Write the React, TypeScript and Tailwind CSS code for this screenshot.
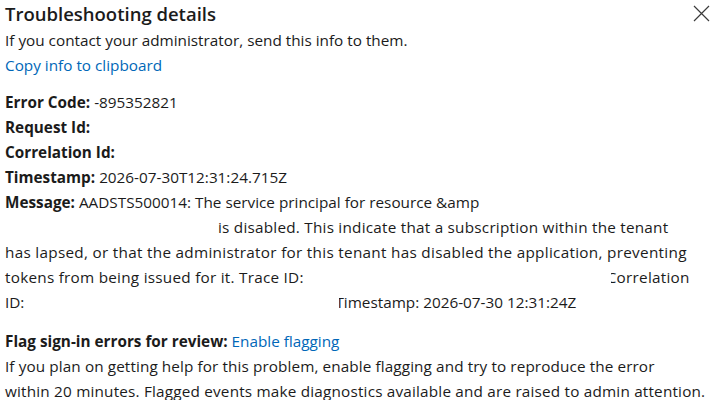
const FIELDS = [
  { label: "Error Code:", value: "-895352821" },
  { label: "Request Id:", value: "" },
  { label: "Correlation Id:", value: "" },
  { label: "Timestamp:", value: "2026-07-30T12:31:24.715Z" },
];

// blank stretch in the message; `clip` masks a few px of what follows
function Gap({ className, clip = false }: { className: string; clip?: boolean }) {
  return (
    <span className={`relative inline-block h-[1px] ${className}`}>
      {clip && <span className="absolute -right-[4px] -top-[20px] z-10 h-[25px] w-[4px] bg-white" />}
    </span>
  );
}

export default function App() {
  return (
    <div
      className="relative h-[400px] w-[716px] overflow-hidden bg-white pl-[5px] text-[15.3px] leading-[25px] text-[#1b1b1b]"
      style={{ fontFamily: '"Segoe UI", "Open Sans", "Noto Sans", sans-serif' }}
    >
      <button className="absolute right-[6px] top-[5px] text-[#3b3b3b]" aria-label="Close">
        <svg width="17" height="17" viewBox="0 0 17 17" fill="none" stroke="currentColor" strokeWidth="1.2">
          <path d="M1 1L16 16M16 1L1 16" />
        </svg>
      </button>

      <h2 className="text-[18.5px] font-semibold leading-[28px]">Troubleshooting details</h2>
      <p>If you contact your administrator, send this info to them.</p>
      <a className="block text-[#0067b8]" href="#">
        Copy info to clipboard
      </a>

      <div className="mt-[12px]">
        {FIELDS.map((f) => (
          <p key={f.label}>
            <span className="font-bold">{f.label}</span> {f.value}
          </p>
        ))}
        <p>
          <span className="font-bold">Message:</span> AADSTS500014: The service principal for resource &amp;amp
        </p>
        <p className="tracking-[0.23px]">
          <Gap className="w-[213px]" />
          is disabled. This indicate that a subscription within the tenant
        </p>
        <p className="tracking-[0.29px]">
          has lapsed, or that the administrator for this tenant has disabled the application, preventing
        </p>
        <p className="tracking-[0.25px]">
          tokens from being issued for it. Trace ID:
          <Gap className="w-[303px]" clip />
          Correlation
        </p>
        <p>
          ID:
          <Gap className="w-[311px]" clip />
          Timestamp: 2026-07-30 12:31:24Z
        </p>
      </div>

      <div className="mt-[14px]">
        <p>
          <span className="font-bold">Flag sign-in errors for review:</span>{" "}
          <a className="text-[#0067b8]" href="#">
            Enable flagging
          </a>
        </p>
        <p className="tracking-[0.1px]">
          If you plan on getting help for this problem, enable flagging and try to reproduce the error
        </p>
        <p className="tracking-[0.19px]">
          within 20 minutes. Flagged events make diagnostics available and are raised to admin attention.
        </p>
      </div>
    </div>
  );
}
